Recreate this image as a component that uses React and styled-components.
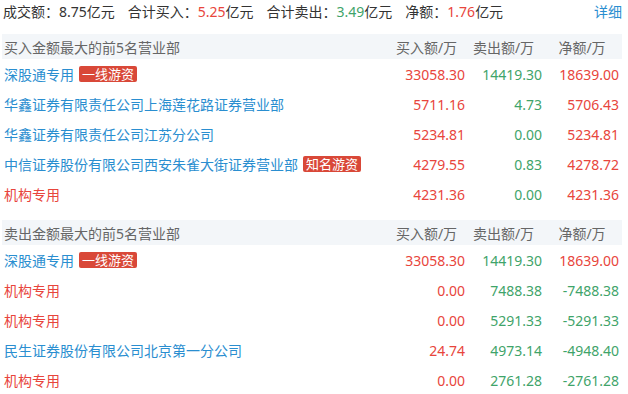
import styled, { createGlobalStyle } from "styled-components";

const GlobalStyle = createGlobalStyle`
    body {
        margin: 0;
        background: #fff;
        font-family: "Noto Sans", "Noto Sans CJK SC", sans-serif;
        font-size: 14px;
        color: #333;
    }
`;

const RED = "#e8453c";
const GREEN = "#3fa46a";
const BLUE = "#2a8ed0";

const Wrapper = styled.div`
    width: 620px;
    padding: 0 2px;
`;

const Summary = styled.div`
    display: flex;
    align-items: center;
    height: 22px;
    margin-bottom: 12px;
    padding-left: 1px;
    white-space: nowrap;

    .item {
        margin-right: 13px;
    }
    .more {
        margin-left: auto;
        color: ${BLUE};
        cursor: pointer;
    }
`;

const Value = styled.span`
    color: ${(p) => (p.$tone === "up" ? RED : p.$tone === "down" ? GREEN : "#333")};
`;

const Section = styled.section`
    margin-bottom: 11px;
`;

const Grid = styled.div`
    display: grid;
    grid-template-columns: 1fr 77px 77px 80px;
    align-items: center;
    white-space: nowrap;
`;

const HeadRow = styled(Grid)`
    height: 25px;
    background: #f3f6f9;
    color: #666;

    .title {
        padding-left: 2px;
    }
    .col {
        text-align: center;
    }
`;

const Row = styled(Grid)`
    height: 30px;

    .num {
        text-align: right;
    }
    .num:last-child {
        padding-right: 3px;
    }
`;

const Name = styled.div`
    display: flex;
    align-items: center;
    gap: 5px;
    padding-left: 2px;
    color: ${(p) => (p.$inst ? RED : BLUE)};
`;

const Badge = styled.span`
    display: inline-block;
    height: 16px;
    line-height: 16px;
    padding: 0 3px;
    border-radius: 2px;
    background: #d94838;
    color: #fff;
    font-size: 13px;
`;

const Num = styled.div`
    color: ${(p) => (p.$down ? GREEN : RED)};
`;

const buyList = [
    { name: "深股通专用", tag: "一线游资", buy: "33058.30", sell: "14419.30", net: "18639.00" },
    { name: "华鑫证券有限责任公司上海莲花路证券营业部", buy: "5711.16", sell: "4.73", net: "5706.43" },
    { name: "华鑫证券有限责任公司江苏分公司", buy: "5234.81", sell: "0.00", net: "5234.81" },
    { name: "中信证券股份有限公司西安朱雀大街证券营业部", tag: "知名游资", buy: "4279.55", sell: "0.83", net: "4278.72" },
    { name: "机构专用", inst: true, buy: "4231.36", sell: "0.00", net: "4231.36" },
];

const sellList = [
    { name: "深股通专用", tag: "一线游资", buy: "33058.30", sell: "14419.30", net: "18639.00" },
    { name: "机构专用", inst: true, buy: "0.00", sell: "7488.38", net: "-7488.38" },
    { name: "机构专用", inst: true, buy: "0.00", sell: "5291.33", net: "-5291.33" },
    { name: "民生证券股份有限公司北京第一分公司", buy: "24.74", sell: "4973.14", net: "-4948.40" },
    { name: "机构专用", inst: true, buy: "0.00", sell: "2761.28", net: "-2761.28" },
];

function Table({ title, data }) {
    return (
        <Section>
            <HeadRow>
                <div className="title">{title}</div>
                <div className="col">买入额/万</div>
                <div className="col">卖出额/万</div>
                <div className="col">净额/万</div>
            </HeadRow>
            {data.map((d, i) => (
                <Row key={i}>
                    <Name $inst={d.inst}>
                        {d.name}
                        {d.tag && <Badge>{d.tag}</Badge>}
                    </Name>
                    <Num className="num">{d.buy}</Num>
                    <Num className="num" $down>{d.sell}</Num>
                    <Num className="num" $down={d.net.startsWith("-")}>{d.net}</Num>
                </Row>
            ))}
        </Section>
    );
}

export default function App() {
    return (
        <Wrapper>
            <GlobalStyle />
            <Summary>
                <span className="item">成交额：<Value>8.75</Value>亿元</span>
                <span className="item">合计买入：<Value $tone="up">5.25</Value>亿元</span>
                <span className="item">合计卖出：<Value $tone="down">3.49</Value>亿元</span>
                <span className="item">净额：<Value $tone="up">1.76</Value>亿元</span>
                <span className="more">详细</span>
            </Summary>
            <Table title="买入金额最大的前5名营业部" data={buyList} />
            <Table title="卖出金额最大的前5名营业部" data={sellList} />
        </Wrapper>
    );
}
